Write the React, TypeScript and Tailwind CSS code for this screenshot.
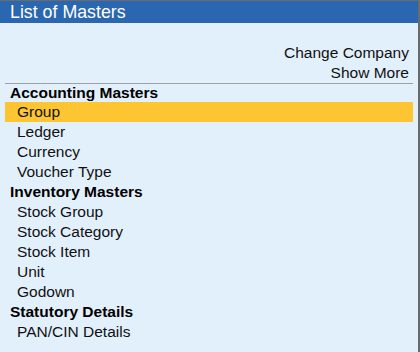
import React from "react";

const sections: { title: string; items: string[] }[] = [
  { title: "Accounting Masters", items: ["Group", "Ledger", "Currency", "Voucher Type"] },
  { title: "Inventory Masters", items: ["Stock Group", "Stock Category", "Stock Item", "Unit", "Godown"] },
  { title: "Statutory Details", items: ["PAN/CIN Details"] },
];

export default function App() {
  return (
    <div
      className="w-[420px] h-[352px] bg-[#e2f0fc] border-t border-t-[#6b6b6b] border-r-2 border-r-[#6b6b6b] flex flex-col overflow-hidden text-[#111]"
      style={{ fontFamily: '"Liberation Sans", Arial, sans-serif' }}
    >
      <div className="h-[22px] bg-[#2a67b0] text-white text-[17.8px] leading-[22px] pl-[10px] shrink-0">
        List of Masters
      </div>
      <div className="flex flex-col px-[5px] pt-[20px]">
        <div className="flex flex-col items-end pr-[4px] text-[15.5px] leading-[20px]">
          <div>Change Company</div>
          <div>Show More</div>
        </div>
        <div className="h-px bg-[#a0a0a0]" />
        {sections.map((s, i) => (
          <div key={s.title} className="flex flex-col">
            <div
              className={`${i === 0 ? "h-[18px] leading-[18px]" : "h-[20px] leading-[20px]"} text-[15.5px] font-bold pl-[5px] text-black`}
            >
              {s.title}
            </div>
            {s.items.map((it) => (
              <div
                key={it}
                className={`h-[20px] leading-[20px] text-[15.5px] pl-[12px] ${it === "Group" ? "bg-[#fec533]" : ""}`}
              >
                {it}
              </div>
            ))}
          </div>
        ))}
      </div>
    </div>
  );
}
